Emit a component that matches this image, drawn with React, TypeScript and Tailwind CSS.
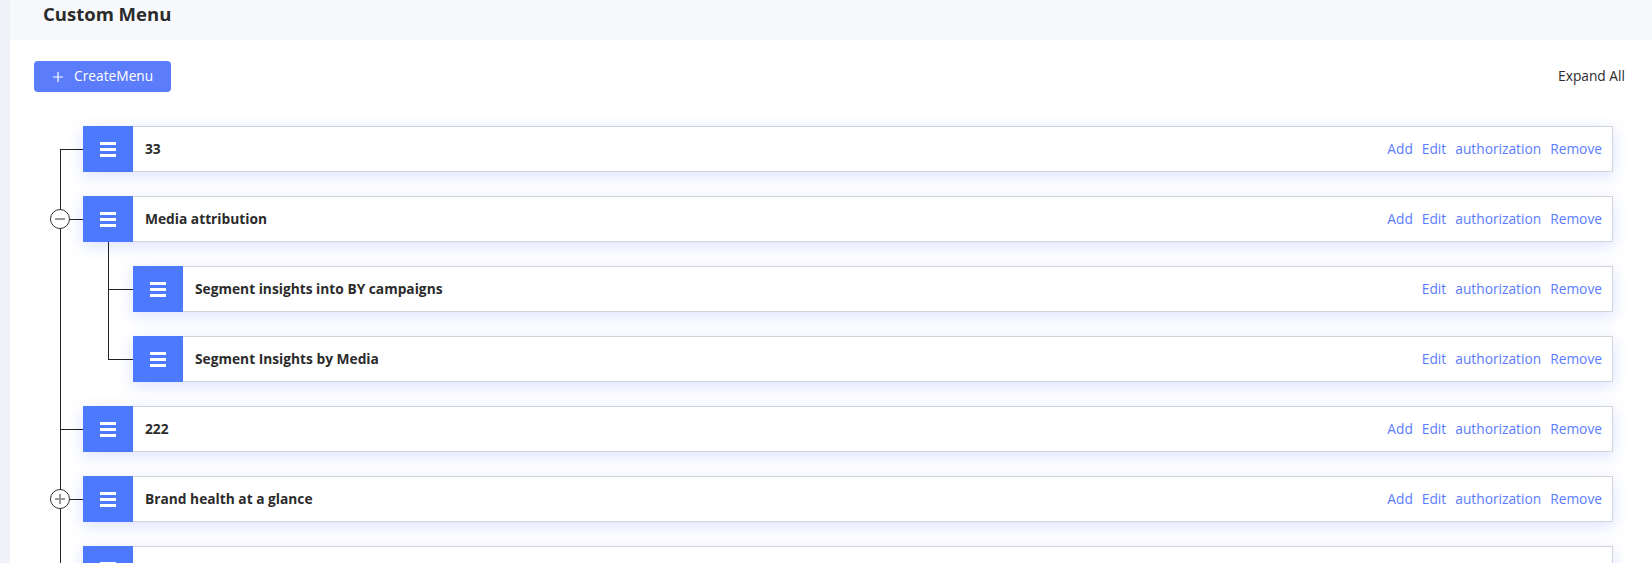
import { Fragment } from "react";

type MenuNode = {
  name: string;
  canAdd: boolean;
  expanded?: boolean;
  collapsed?: boolean;
  children?: MenuNode[];
};

const menus: MenuNode[] = [
  { name: "33", canAdd: true },
  {
    name: "Media attribution",
    canAdd: true,
    expanded: true,
    children: [
      { name: "Segment insights into BY campaigns", canAdd: false },
      { name: "Segment Insights by Media", canAdd: false },
    ],
  },
  { name: "222", canAdd: true },
  { name: "Brand health at a glance", canAdd: true, collapsed: true },
  { name: "Event Marketing Tools", canAdd: true },
];

function MenuIcon() {
  return (
    <div className="flex h-full w-[50px] shrink-0 flex-col items-center justify-center gap-[3px] bg-[#4d79ff]">
      <span className="h-[3px] w-4 bg-white" />
      <span className="h-[3px] w-4 bg-white" />
      <span className="h-[3px] w-4 bg-white" />
    </div>
  );
}

function Card({ node }: { node: MenuNode }) {
  return (
    <div className="flex h-[46px] bg-white shadow-[0_4px_16px_rgba(77,110,255,0.2)]">
      <MenuIcon />
      <div className="flex flex-1 items-center justify-between border-y border-r border-[#d3d3dc] pl-3 pr-[10px]">
        <span className="text-[13.75px] font-bold text-[#2b2b2b]">{node.name}</span>
        <div className="flex items-center gap-[9px] text-[13.75px] text-[#5b7cff]">
          {node.canAdd && <span>Add</span>}
          <span>Edit</span>
          <span>authorization</span>
          <span>Remove</span>
        </div>
      </div>
    </div>
  );
}

function Toggle({ open }: { open: boolean }) {
  return (
    <div className="absolute left-[-33px] top-[13px] z-10 flex h-5 w-5 items-center justify-center rounded-full border border-[#333] bg-white">
      <span className="absolute h-[2px] w-[10px] bg-[#999]" />
      {!open && <span className="absolute h-[10px] w-[2px] bg-[#999]" />}
    </div>
  );
}

export default function App() {
  return (
    <div className="flex h-screen overflow-hidden bg-white font-['Open_Sans',sans-serif] text-[#333]">
      {/* left strip */}
      <div className="w-[10px] shrink-0 bg-[#f0f2f7]" />

      <div className="flex-1">
        <div className="h-[40px] bg-[#f8f9fc] pl-[33px]">
          <h1 className="text-[18.5px] font-bold leading-[28px] text-[#2b2b2b]">Custom Menu</h1>
        </div>

        <div className="pl-[24px] pr-[27px]">
          <div className="mt-[21px] flex items-center justify-between">
            <button className="flex h-[31px] w-[137px] items-center gap-[11px] rounded-[4px] bg-[#5b7cfb] pl-[19px] text-[13.75px] text-white">
              <svg width="10" height="10" viewBox="0 0 10 10" stroke="white" strokeWidth="1.2">
                <path d="M5 0v10M0 5h10" />
              </svg>
              CreateMenu
            </button>
            <span className="text-[13.75px] text-[#2b2b2b]">Expand All</span>
          </div>

          {/* tree */}
          <div className="mt-[34px] pl-[49px] pr-[12px]">
            {menus.map((node, i) => {
              const first = i === 0;
              const last = i === menus.length - 1;
              return (
                <div key={node.name} className="relative pb-[24px]">
                  <span
                    className={
                      first
                        ? "absolute left-[-23px] top-[23px] bottom-0 w-px bg-[#222]"
                        : last
                          ? "absolute left-[-23px] top-0 h-[24px] w-px bg-[#222]"
                          : "absolute left-[-23px] top-0 bottom-0 w-px bg-[#222]"
                    }
                  />
                  <div className="relative">
                    <span className="absolute left-[-23px] top-[23px] h-px w-[23px] bg-[#222]" />
                    {node.expanded && <Toggle open />}
                    {node.collapsed && <Toggle open={false} />}
                    <Card node={node} />
                  </div>
                  {node.expanded && node.children && (
                    <div className="pl-[50px]">
                      {node.children.map((child, j) => (
                        <Fragment key={child.name}>
                          <div className="relative mt-[24px]">
                            <span
                              className={
                                j === 0
                                  ? "absolute left-[-25px] top-[-24px] h-[48px] w-px bg-[#222]"
                                  : "absolute left-[-25px] top-[-47px] h-[71px] w-px bg-[#222]"
                              }
                            />
                            <span className="absolute left-[-25px] top-[23px] h-px w-[25px] bg-[#222]" />
                            <Card node={child} />
                          </div>
                        </Fragment>
                      ))}
                    </div>
                  )}
                </div>
              );
            })}
          </div>
        </div>
      </div>
    </div>
  );
}
